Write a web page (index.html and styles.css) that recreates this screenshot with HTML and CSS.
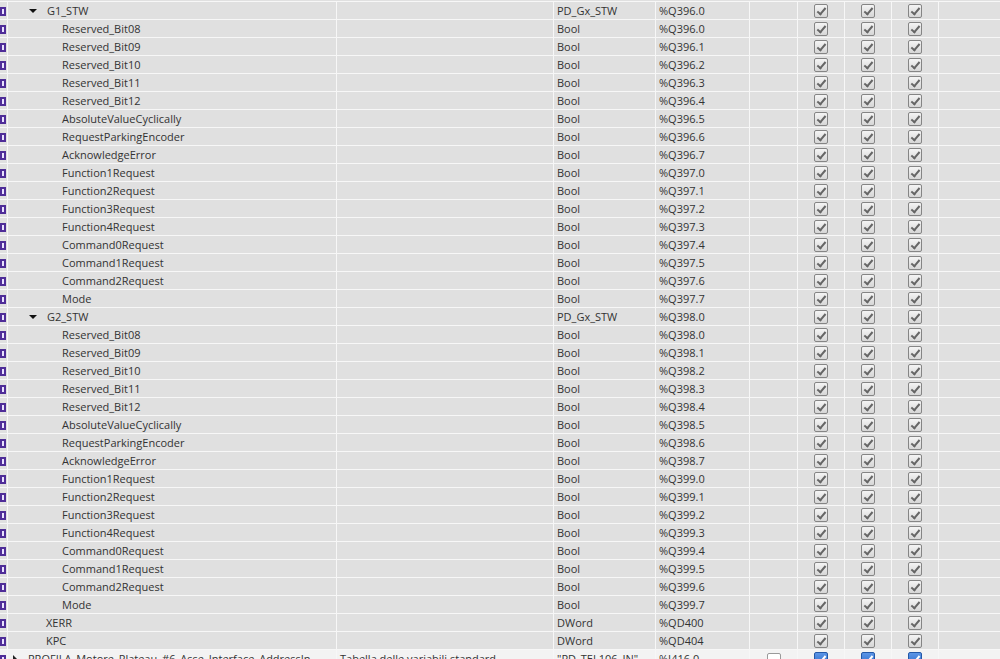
FILE: index.html
```html
<!DOCTYPE html>
<html lang="en">
<head>
    <meta charset="UTF-8">
    <title>PLC tags</title>
    <link rel="stylesheet" href="styles.css">
</head>
<body>
    <div class="stub"></div>
    <div class="tags">
        <div class="row"><div class="ico"><i></i></div><div class="name l1"><b class="exp"></b>G1_STW</div><div></div><div class="txt">PD_Gx_STW</div><div class="txt">%Q396.0</div><div></div><div><span class="cb on"></span></div><div><span class="cb on"></span></div><div><span class="cb on"></span></div><div></div></div>
        <div class="row"><div class="ico"><i></i></div><div class="name l2">Reserved_Bit08</div><div></div><div class="txt">Bool</div><div class="txt">%Q396.0</div><div></div><div><span class="cb on"></span></div><div><span class="cb on"></span></div><div><span class="cb on"></span></div><div></div></div>
        <div class="row"><div class="ico"><i></i></div><div class="name l2">Reserved_Bit09</div><div></div><div class="txt">Bool</div><div class="txt">%Q396.1</div><div></div><div><span class="cb on"></span></div><div><span class="cb on"></span></div><div><span class="cb on"></span></div><div></div></div>
        <div class="row"><div class="ico"><i></i></div><div class="name l2">Reserved_Bit10</div><div></div><div class="txt">Bool</div><div class="txt">%Q396.2</div><div></div><div><span class="cb on"></span></div><div><span class="cb on"></span></div><div><span class="cb on"></span></div><div></div></div>
        <div class="row"><div class="ico"><i></i></div><div class="name l2">Reserved_Bit11</div><div></div><div class="txt">Bool</div><div class="txt">%Q396.3</div><div></div><div><span class="cb on"></span></div><div><span class="cb on"></span></div><div><span class="cb on"></span></div><div></div></div>
        <div class="row"><div class="ico"><i></i></div><div class="name l2">Reserved_Bit12</div><div></div><div class="txt">Bool</div><div class="txt">%Q396.4</div><div></div><div><span class="cb on"></span></div><div><span class="cb on"></span></div><div><span class="cb on"></span></div><div></div></div>
        <div class="row"><div class="ico"><i></i></div><div class="name l2">AbsoluteValueCyclically</div><div></div><div class="txt">Bool</div><div class="txt">%Q396.5</div><div></div><div><span class="cb on"></span></div><div><span class="cb on"></span></div><div><span class="cb on"></span></div><div></div></div>
        <div class="row"><div class="ico"><i></i></div><div class="name l2">RequestParkingEncoder</div><div></div><div class="txt">Bool</div><div class="txt">%Q396.6</div><div></div><div><span class="cb on"></span></div><div><span class="cb on"></span></div><div><span class="cb on"></span></div><div></div></div>
        <div class="row"><div class="ico"><i></i></div><div class="name l2">AcknowledgeError</div><div></div><div class="txt">Bool</div><div class="txt">%Q396.7</div><div></div><div><span class="cb on"></span></div><div><span class="cb on"></span></div><div><span class="cb on"></span></div><div></div></div>
        <div class="row"><div class="ico"><i></i></div><div class="name l2">Function1Request</div><div></div><div class="txt">Bool</div><div class="txt">%Q397.0</div><div></div><div><span class="cb on"></span></div><div><span class="cb on"></span></div><div><span class="cb on"></span></div><div></div></div>
        <div class="row"><div class="ico"><i></i></div><div class="name l2">Function2Request</div><div></div><div class="txt">Bool</div><div class="txt">%Q397.1</div><div></div><div><span class="cb on"></span></div><div><span class="cb on"></span></div><div><span class="cb on"></span></div><div></div></div>
        <div class="row"><div class="ico"><i></i></div><div class="name l2">Function3Request</div><div></div><div class="txt">Bool</div><div class="txt">%Q397.2</div><div></div><div><span class="cb on"></span></div><div><span class="cb on"></span></div><div><span class="cb on"></span></div><div></div></div>
        <div class="row"><div class="ico"><i></i></div><div class="name l2">Function4Request</div><div></div><div class="txt">Bool</div><div class="txt">%Q397.3</div><div></div><div><span class="cb on"></span></div><div><span class="cb on"></span></div><div><span class="cb on"></span></div><div></div></div>
        <div class="row"><div class="ico"><i></i></div><div class="name l2">Command0Request</div><div></div><div class="txt">Bool</div><div class="txt">%Q397.4</div><div></div><div><span class="cb on"></span></div><div><span class="cb on"></span></div><div><span class="cb on"></span></div><div></div></div>
        <div class="row"><div class="ico"><i></i></div><div class="name l2">Command1Request</div><div></div><div class="txt">Bool</div><div class="txt">%Q397.5</div><div></div><div><span class="cb on"></span></div><div><span class="cb on"></span></div><div><span class="cb on"></span></div><div></div></div>
        <div class="row"><div class="ico"><i></i></div><div class="name l2">Command2Request</div><div></div><div class="txt">Bool</div><div class="txt">%Q397.6</div><div></div><div><span class="cb on"></span></div><div><span class="cb on"></span></div><div><span class="cb on"></span></div><div></div></div>
        <div class="row"><div class="ico"><i></i></div><div class="name l2">Mode</div><div></div><div class="txt">Bool</div><div class="txt">%Q397.7</div><div></div><div><span class="cb on"></span></div><div><span class="cb on"></span></div><div><span class="cb on"></span></div><div></div></div>
        <div class="row"><div class="ico"><i></i></div><div class="name l1"><b class="exp"></b>G2_STW</div><div></div><div class="txt">PD_Gx_STW</div><div class="txt">%Q398.0</div><div></div><div><span class="cb on"></span></div><div><span class="cb on"></span></div><div><span class="cb on"></span></div><div></div></div>
        <div class="row"><div class="ico"><i></i></div><div class="name l2">Reserved_Bit08</div><div></div><div class="txt">Bool</div><div class="txt">%Q398.0</div><div></div><div><span class="cb on"></span></div><div><span class="cb on"></span></div><div><span class="cb on"></span></div><div></div></div>
        <div class="row"><div class="ico"><i></i></div><div class="name l2">Reserved_Bit09</div><div></div><div class="txt">Bool</div><div class="txt">%Q398.1</div><div></div><div><span class="cb on"></span></div><div><span class="cb on"></span></div><div><span class="cb on"></span></div><div></div></div>
        <div class="row"><div class="ico"><i></i></div><div class="name l2">Reserved_Bit10</div><div></div><div class="txt">Bool</div><div class="txt">%Q398.2</div><div></div><div><span class="cb on"></span></div><div><span class="cb on"></span></div><div><span class="cb on"></span></div><div></div></div>
        <div class="row"><div class="ico"><i></i></div><div class="name l2">Reserved_Bit11</div><div></div><div class="txt">Bool</div><div class="txt">%Q398.3</div><div></div><div><span class="cb on"></span></div><div><span class="cb on"></span></div><div><span class="cb on"></span></div><div></div></div>
        <div class="row"><div class="ico"><i></i></div><div class="name l2">Reserved_Bit12</div><div></div><div class="txt">Bool</div><div class="txt">%Q398.4</div><div></div><div><span class="cb on"></span></div><div><span class="cb on"></span></div><div><span class="cb on"></span></div><div></div></div>
        <div class="row"><div class="ico"><i></i></div><div class="name l2">AbsoluteValueCyclically</div><div></div><div class="txt">Bool</div><div class="txt">%Q398.5</div><div></div><div><span class="cb on"></span></div><div><span class="cb on"></span></div><div><span class="cb on"></span></div><div></div></div>
        <div class="row"><div class="ico"><i></i></div><div class="name l2">RequestParkingEncoder</div><div></div><div class="txt">Bool</div><div class="txt">%Q398.6</div><div></div><div><span class="cb on"></span></div><div><span class="cb on"></span></div><div><span class="cb on"></span></div><div></div></div>
        <div class="row"><div class="ico"><i></i></div><div class="name l2">AcknowledgeError</div><div></div><div class="txt">Bool</div><div class="txt">%Q398.7</div><div></div><div><span class="cb on"></span></div><div><span class="cb on"></span></div><div><span class="cb on"></span></div><div></div></div>
        <div class="row"><div class="ico"><i></i></div><div class="name l2">Function1Request</div><div></div><div class="txt">Bool</div><div class="txt">%Q399.0</div><div></div><div><span class="cb on"></span></div><div><span class="cb on"></span></div><div><span class="cb on"></span></div><div></div></div>
        <div class="row"><div class="ico"><i></i></div><div class="name l2">Function2Request</div><div></div><div class="txt">Bool</div><div class="txt">%Q399.1</div><div></div><div><span class="cb on"></span></div><div><span class="cb on"></span></div><div><span class="cb on"></span></div><div></div></div>
        <div class="row"><div class="ico"><i></i></div><div class="name l2">Function3Request</div><div></div><div class="txt">Bool</div><div class="txt">%Q399.2</div><div></div><div><span class="cb on"></span></div><div><span class="cb on"></span></div><div><span class="cb on"></span></div><div></div></div>
        <div class="row"><div class="ico"><i></i></div><div class="name l2">Function4Request</div><div></div><div class="txt">Bool</div><div class="txt">%Q399.3</div><div></div><div><span class="cb on"></span></div><div><span class="cb on"></span></div><div><span class="cb on"></span></div><div></div></div>
        <div class="row"><div class="ico"><i></i></div><div class="name l2">Command0Request</div><div></div><div class="txt">Bool</div><div class="txt">%Q399.4</div><div></div><div><span class="cb on"></span></div><div><span class="cb on"></span></div><div><span class="cb on"></span></div><div></div></div>
        <div class="row"><div class="ico"><i></i></div><div class="name l2">Command1Request</div><div></div><div class="txt">Bool</div><div class="txt">%Q399.5</div><div></div><div><span class="cb on"></span></div><div><span class="cb on"></span></div><div><span class="cb on"></span></div><div></div></div>
        <div class="row"><div class="ico"><i></i></div><div class="name l2">Command2Request</div><div></div><div class="txt">Bool</div><div class="txt">%Q399.6</div><div></div><div><span class="cb on"></span></div><div><span class="cb on"></span></div><div><span class="cb on"></span></div><div></div></div>
        <div class="row"><div class="ico"><i></i></div><div class="name l2">Mode</div><div></div><div class="txt">Bool</div><div class="txt">%Q399.7</div><div></div><div><span class="cb on"></span></div><div><span class="cb on"></span></div><div><span class="cb on"></span></div><div></div></div>
        <div class="row"><div class="ico"><i></i></div><div class="name l1">XERR</div><div></div><div class="txt">DWord</div><div class="txt">%QD400</div><div></div><div><span class="cb on"></span></div><div><span class="cb on"></span></div><div><span class="cb on"></span></div><div></div></div>
        <div class="row"><div class="ico"><i></i></div><div class="name l1">KPC</div><div></div><div class="txt">DWord</div><div class="txt">%QD404</div><div></div><div><span class="cb on"></span></div><div><span class="cb on"></span></div><div><span class="cb on"></span></div><div></div></div>
        <div class="row top"><div class="ico"><i></i></div><div class="name l0"><b class="col"></b>PROFILA_Motore_Plateau_#6_Asse_Interface_AddressIn</div><div class="txt">Tabella delle variabili standard</div><div class="txt">"PD_TEL106_IN"</div><div class="txt">%I416.0</div><div><span class="cb off"></span></div><div><span class="cb blue"></span></div><div><span class="cb blue"></span></div><div><span class="cb blue"></span></div><div></div></div>
    </div>
</body>
</html>
```

FILE: styles.css
```css
body {
    margin: 0;
    background-color: #f7f7f7;
    font-family: "Open Sans", "Noto Sans", sans-serif;
    font-size: 11px;
    color: #333;
    overflow: hidden;
}
.stub {
    height: 1px;
    background-color: #e0e0e0;
}
.tags {
    display: flex;
    flex-direction: column;
    gap: 1px;
    padding-top: 1px;
}
.row {
    display: grid;
    grid-template-columns: 7px 328px 216px 101px 93px 47px 46px 46px 46px 100px;
    column-gap: 1px;
    height: 17px;
}
.row > div {
    background-color: #e0e0e0;
    overflow: hidden;
    white-space: nowrap;
    line-height: 17px;
}
.row.top > div {
    background-color: #f3f3f3;
}
.txt {
    padding-left: 3px;
}
.name {
    display: flex;
    align-items: center;
}
.name.l0 { padding-left: 20px; }
.name.l1 { padding-left: 38px; }
.name.l2 { padding-left: 54px; }

/* tree arrows */
.exp, .col {
    width: 0;
    height: 0;
    border-style: solid;
    border-color: transparent;
}
.exp {
    margin-left: -17px;
    margin-right: 10px;
    border-width: 4px 4px 0 4px;
    border-top-color: #111;
}
.col {
    margin-left: -15px;
    margin-right: 11px;
    border-width: 4px 0 4px 4px;
    border-left-color: #222;
}

/* tag icon, cut by the left edge */
.ico i {
    display: block;
    width: 6px;
    height: 9px;
    margin-top: 5px;
    background-color: #4f2d98;
    position: relative;
}
.ico i::before {
    content: '';
    position: absolute;
    left: 2px;
    top: 2px;
    width: 2px;
    height: 5px;
    background-color: #e9e2ff;
}

/* checkboxes */
.row > div:nth-child(n+6):nth-child(-n+9) {
    display: flex;
    justify-content: center;
    align-items: flex-start;
}
.cb {
    display: block;
    position: relative;
    width: 14px;
    height: 14px;
    margin-top: 2px;
    box-sizing: border-box;
    border: 1px solid #858585;
    border-radius: 2px;
    background: linear-gradient(#f4f4f4, #d6d6d6);
}
.cb.on::after,
.cb.blue::after {
    content: '';
    position: absolute;
    left: 4px;
    top: 1px;
    width: 3px;
    height: 7px;
    border: solid #666;
    border-width: 0 2px 2px 0;
    transform: rotate(40deg);
}
.cb.off {
    background: #fff;
    border-color: #9a9a9a;
    margin-top: 3px;
}
.cb.blue {
    background: linear-gradient(#5b95e6, #2f6ccc);
    border-color: #2358a8;
}
.cb.blue::after {
    border-color: #fff;
}
```
